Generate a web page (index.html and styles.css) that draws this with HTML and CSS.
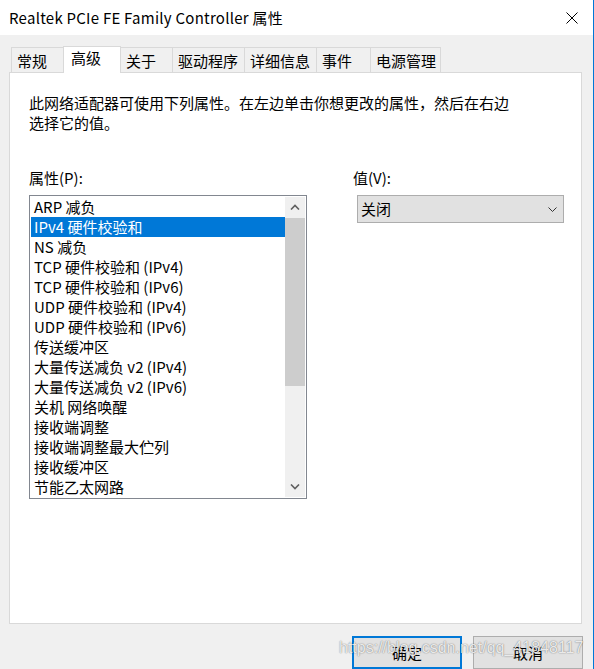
FILE: index.html
```html
<!DOCTYPE html>
<html lang="zh-CN">
<head>
<meta charset="utf-8">
<title>Realtek PCIe FE Family Controller 属性</title>
<link rel="stylesheet" href="styles.css">
</head>
<body>
<div class="window">
  <div class="titlebar">
    <span class="title">Realtek PCIe FE Family Controller 属性</span>
    <svg class="close" width="12" height="12" viewBox="0 0 12 12"><path d="M0.5 0.5 L11.5 11.5 M11.5 0.5 L0.5 11.5" stroke="#000" stroke-width="1" fill="none"/></svg>
  </div>
  <div class="tabs">
    <div class="tab w53">常规</div>
    <div class="tab active w58">高级</div>
    <div class="tab w53">关于</div>
    <div class="tab w73">驱动程序</div>
    <div class="tab w73">详细信息</div>
    <div class="tab w55">事件</div>
    <div class="tab w71">电源管理</div>
  </div>
  <div class="panel">
    <p class="desc">此网络适配器可使用下列属性。在左边单击你想更改的属性，然后在右边<br>选择它的值。</p>
    <div class="cols">
      <div class="col-left">
        <div class="label">属性(P):</div>
        <div class="listbox">
          <ul class="items">
            <li>ARP 减负</li>
            <li class="sel">IPv4 硬件校验和</li>
            <li>NS 减负</li>
            <li>TCP 硬件校验和 (IPv4)</li>
            <li>TCP 硬件校验和 (IPv6)</li>
            <li>UDP 硬件校验和 (IPv4)</li>
            <li>UDP 硬件校验和 (IPv6)</li>
            <li>传送缓冲区</li>
            <li>大量传送减负 v2 (IPv4)</li>
            <li>大量传送减负 v2 (IPv6)</li>
            <li>关机 网络唤醒</li>
            <li>接收端调整</li>
            <li>接收端调整最大伫列</li>
            <li>接收缓冲区</li>
            <li>节能乙太网路</li>
          </ul>
          <div class="scrollbar">
            <div class="sb-btn"><svg width="10" height="6" viewBox="0 0 10 6"><path d="M1 5.5 L5 1.5 L9 5.5" stroke="#606060" stroke-width="1.6" fill="none"/></svg></div>
            <div class="sb-track"><div class="sb-thumb"></div></div>
            <div class="sb-btn"><svg width="10" height="6" viewBox="0 0 10 6"><path d="M1 0.5 L5 4.5 L9 0.5" stroke="#606060" stroke-width="1.6" fill="none"/></svg></div>
          </div>
        </div>
      </div>
      <div class="col-right">
        <div class="label">值(V):</div>
        <div class="combo">
          <span>关闭</span>
          <svg width="9" height="5" viewBox="0 0 9 5"><path d="M0.5 0.5 L4.5 4.5 L8.5 0.5" stroke="#333" stroke-width="1" fill="none"/></svg>
        </div>
      </div>
    </div>
  </div>
  <div class="footer">
    <div class="btn default">确定</div>
    <div class="btn">取消</div>
  </div>
  <div class="watermark">https://blog.csdn.net/qq_41848117</div>
</div>
</body>
</html>
```
FILE: styles.css
```css
* { box-sizing: border-box; }
html, body { margin: 0; padding: 0; }
body {
  width: 594px;
  height: 669px;
  overflow: hidden;
  font-family: "Noto Sans CJK SC", "Noto Sans", sans-serif;
  font-size: 15px;
  color: #000;
}
.window {
  position: relative;
  width: 594px;
  height: 669px;
  background: #f0f0f0;
  border-right: 1px solid #0078d7;
  overflow: hidden;
}
.titlebar {
  height: 35px;
  background: #fff;
  display: flex;
  align-items: center;
  justify-content: space-between;
  padding: 0 15px 0 9px;
}
.title { font-size: 15px; line-height: 20px; letter-spacing: 0.25px; }
.tabs {
  display: flex;
  align-items: flex-end;
  height: 27px;
  margin: 11px 0 0 11px;
  position: relative;
  z-index: 1;
}
.tab {
  height: 25px;
  margin-bottom: 1px;
  margin-left: -1px;
  border: 1px solid #d9d9d9;
  border-bottom: none;
  background: #f0f0f0;
  padding: 3px 0 0 5px;
  line-height: 20px;
  white-space: nowrap;
}
.tab:first-child { margin-left: 0; }
.tab.active {
  height: 27px;
  margin-bottom: 0;
  background: #fff;
  padding: 1px 0 0 7px;
}
.w53 { width: 53px; }
.w58 { width: 58px; }
.w73 { width: 73px; }
.w55 { width: 55px; }
.w71 { width: 71px; }
.panel {
  margin: -1px 0 0 9px;
  width: 573px;
  height: 552px;
  background: #fff;
  border: 1px solid #d9d9d9;
  padding: 20px 0 0 19px;
}
.desc {
  margin: 0;
  line-height: 20px;
}
.cols {
  display: flex;
  margin-top: 35px;
}
.col-left { width: 278px; }
.col-right { margin-left: 46px; }
.label {
  line-height: 20px;
  height: 20px;
  margin-bottom: 7px;
}
.listbox {
  display: flex;
  width: 278px;
  height: 304px;
  border: 1px solid #828790;
  padding: 1px;
}
.items {
  list-style: none;
  margin: 0;
  padding: 0;
  flex: 1;
}
.items li {
  height: 20px;
  line-height: 20px;
  padding-left: 3px;
  white-space: nowrap;
}
.items li.sel {
  background: #0078d7;
  color: #fff;
}
.scrollbar {
  width: 20px;
  display: flex;
  flex-direction: column;
  background: #f0f0f0;
}
.sb-btn {
  height: 20px;
  display: flex;
  align-items: center;
  justify-content: center;
}
.sb-track { flex: 1; }
.sb-thumb {
  margin-top: 1px;
  height: 168px;
  background: #cdcdcd;
}
.combo {
  margin-left: 4px;
  width: 207px;
  height: 28px;
  background: #e1e1e1;
  border: 1px solid #adadad;
  display: flex;
  align-items: center;
  justify-content: space-between;
  padding: 0 6px 0 3px;
  line-height: 20px;
}
.footer {
  display: flex;
  justify-content: flex-end;
  gap: 11px;
  margin-top: 12px;
  padding-right: 10px;
}
.btn {
  width: 110px;
  height: 33px;
  background: #e1e1e1;
  border: 1px solid #adadad;
  display: flex;
  align-items: center;
  justify-content: center;
  line-height: 20px;
}
.btn.default { border: 2px solid #0078d7; }
.watermark {
  position: absolute;
  left: 339px;
  top: 639px;
  font-family: "Liberation Sans", Arial, sans-serif;
  font-size: 16px;
  line-height: 18px;
  color: rgba(255, 255, 255, 0.85);
  text-shadow: 0 0 1px rgba(0, 0, 0, 0.45), 0 0 2px rgba(0, 0, 0, 0.2);
  white-space: nowrap;
  pointer-events: none;
}
```
